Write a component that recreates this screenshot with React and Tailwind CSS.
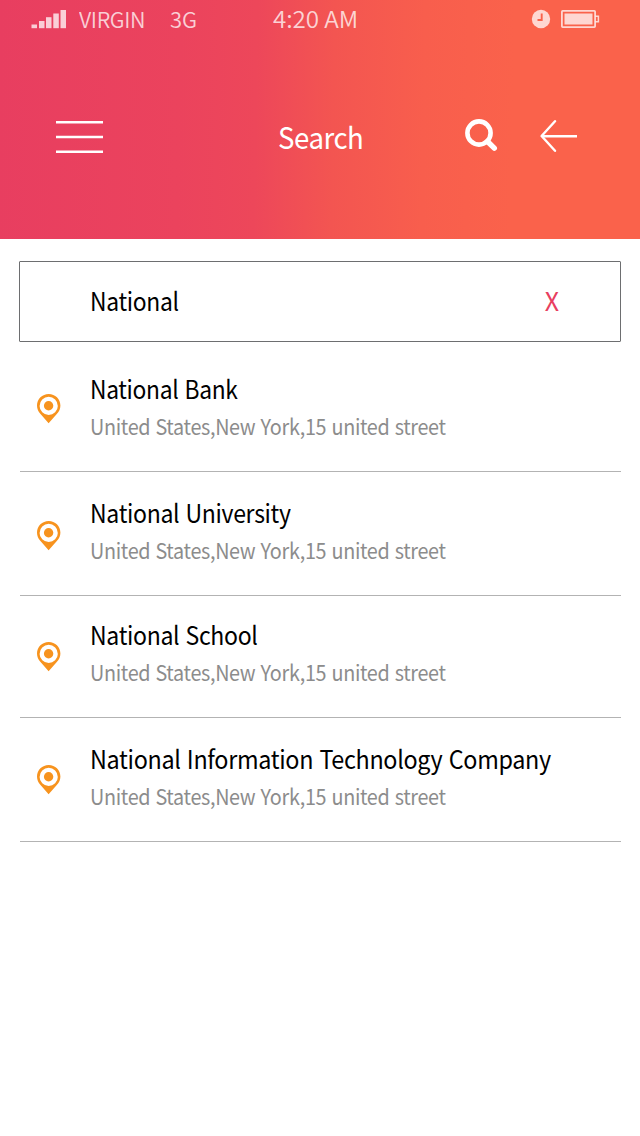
import React from 'react';

const FONT = "font-['Noto_Sans_CJK_SC','Noto_Sans',sans-serif]";

const results = [
  { name: 'National Bank', row: 'h-[130px]', pin: 'pb-[47px]', scale: 'scale-x-[0.912]' },
  { name: 'National University', row: 'h-[124px]', pin: 'pb-[44px]', scale: 'scale-x-[0.922]' },
  { name: 'National School', row: 'h-[122px]', pin: 'pb-[45px]', scale: 'scale-x-[0.922]' },
  { name: 'National Information Technology Company', row: 'h-[124px]', pin: 'pb-[46px]', scale: 'scale-x-[0.935]' },
];

function Pin() {
  return (
    <svg width="24" height="30" viewBox="0 0 24 30" className="block">
      <path
        fillRule="evenodd"
        fill="#f7931e"
        d="M11.700 0C5.200 0 0 5 0 11.500c0 3.200 1.200 5.800 3.300 8.300L11.600 29.300 20 19.800c2.200-2.500 3.400-5.100 3.400-8.300C23.400 5 18.200 0 11.700 0zM11.700 2.800a9.100 9.100 0 1 1 0 18.200a9.100 9.100 0 1 1 0-18.200z"
      />
      <circle cx="11.600" cy="11.800" r="4.700" fill="#f7931e" />
    </svg>
  );
}

function StatusBar() {
  return (
    <div className="flex h-10 items-start text-white/75">
      <svg width="36" height="19" viewBox="0 0 36 19" className="ml-[31px] mt-[10px] block" fill="currentColor">
        <rect x="0.500" y="14.500" width="5.500" height="3.700" />
        <rect x="8" y="11" width="5.500" height="7.200" />
        <rect x="15" y="7.200" width="5.500" height="11" />
        <rect x="22.300" y="3.500" width="5.500" height="14.700" />
        <rect x="29.500" y="0" width="5.500" height="18.200" />
      </svg>
      <span className="ml-[12px] mt-[6px] w-[91px] origin-left scale-x-[0.98] text-[22px] leading-6 font-[350] tracking-[-0.4px]">VIRGIN</span>
      <span className="mt-[6px] w-[103px] origin-left text-[22px] leading-6 font-[350] tracking-[-0.2px]">3G</span>
      <span className="mt-[6px] w-[258px] origin-left scale-x-[1.030] text-[23.500px] leading-6 font-[350] tracking-[-0.1px]">4:20 AM</span>
      <svg width="20" height="20" viewBox="0 0 20 20" className="mt-[9px] block">
        <circle cx="10" cy="10" r="9.200" fill="currentColor" />
        <path d="M10.700 4.500V11H6.500" fill="none" stroke="#fa624b" strokeWidth="1.900" />
      </svg>
      <svg width="39" height="20" viewBox="0 0 39 20" className="ml-[10px] mt-[9px] block">
        <rect x="0.900" y="1.900" width="33.200" height="16.200" rx="0.800" fill="none" stroke="currentColor" strokeWidth="1.800" />
        <rect x="3.500" y="4.500" width="28" height="11" fill="currentColor" />
        <path d="M34.500 7.300H37.400V12.700H34.500" fill="none" stroke="currentColor" strokeWidth="1.500" />
      </svg>
    </div>
  );
}

export default function App() {
  return (
    <main className={`flex h-[1136px] w-[640px] flex-col bg-white text-black ${FONT}`}>
      <header className="h-[239px] bg-[linear-gradient(91deg,#e83e60_0%,#eb435d_28%,#ed475a_40%,#f35551_52%,#f85e4d_66%,#fa624b_80%,#fa624b_100%)]">
        <StatusBar />
        <div className="flex items-start pt-[76px] text-white">
          <svg width="48" height="34" viewBox="0 0 48 34" className="ml-[56px] mt-[4px] block" stroke="currentColor" strokeWidth="2.600">
            <path d="M0 2.300H47M0 17H47M0 31.700H47" />
          </svg>
          <h1 className="ml-[174px] mt-[1px] w-[187px] origin-left scale-x-[0.92] text-[30px] leading-[38px] font-normal tracking-[-0.5px]">Search</h1>
          <svg width="34" height="34" viewBox="0 0 34 34" className="-ml-px mt-[3px] block" fill="none" stroke="currentColor">
            <circle cx="15" cy="14" r="11.600" strokeWidth="4.600" />
            <path d="M23.500 22.500L30.300 29.200" strokeWidth="5.400" strokeLinecap="round" />
          </svg>
          <svg width="38" height="34" viewBox="0 0 38 34" className="ml-[42px] mt-[3px] block" fill="none" stroke="currentColor" strokeWidth="2.400" strokeLinecap="round" strokeLinejoin="round">
            <path d="M15 2.200L1.600 17L15 31.800" />
            <path d="M2 17.200H37" strokeLinecap="butt" strokeWidth="2.600" />
          </svg>
        </div>
      </header>

      <div className="mx-[19px] mt-[22px] flex h-[81px] shrink-0 items-center justify-between rounded-[1px] border border-[#6d6e70] pb-[3px] pl-[70px] pr-[61px]">
        <span className="origin-left scale-x-[0.915] text-[25px] leading-8 tracking-[-0.35px]">National</span>
        <button className="text-[25px] leading-8 font-normal text-[#e83e60]">X</button>
      </div>

      <ul className="mx-5 w-[601px]">
        {results.map((r) => (
          <li key={r.name} className={`flex items-end border-b border-[#b3b3b3] ${r.row}`}>
            <div className={`ml-[17px] w-[53px] ${r.pin}`}>
              <Pin />
            </div>
            <div className="flex flex-col gap-[10px] pb-[33px] whitespace-nowrap">
              <p className={`origin-left self-start text-[25px] leading-8 tracking-[-0.35px] [word-spacing:1.5px] ${r.scale}`}>{r.name}</p>
              <p className="origin-left self-start scale-x-[0.92] text-[21.500px] leading-6 text-[#8c8c8c] tracking-[-0.35px] [word-spacing:1.2px]">United States,New York,15 united street</p>
            </div>
          </li>
        ))}
      </ul>
    </main>
  );
}
